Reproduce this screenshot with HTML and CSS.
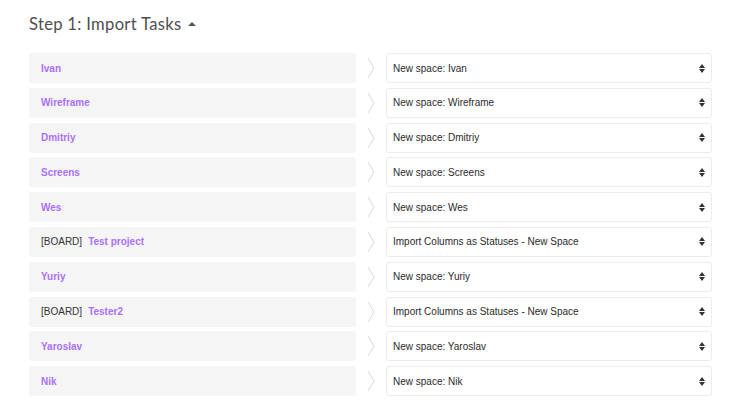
FILE: index.html
```html
<!DOCTYPE html>
<html>
<head>
<meta charset="utf-8">
<link rel="stylesheet" href="styles.css">
</head>
<body>
<div class="page">
  <h2 class="title">Step 1: Import Tasks <span class="caret"></span></h2>
  <div class="rows">
    <div class="row"><div class="src"><span class="name">Ivan</span></div><div class="chev"><svg width="8" height="22" viewBox="0 0 8 22"><path d="M1 1 L7 11 L1 21" fill="none" stroke="#d8d8d8" stroke-width="1"/></svg></div><div class="dst"><span>New space: Ivan</span><span class="arrows"></span></div></div>
    <div class="row"><div class="src"><span class="name">Wireframe</span></div><div class="chev"><svg width="8" height="22" viewBox="0 0 8 22"><path d="M1 1 L7 11 L1 21" fill="none" stroke="#d8d8d8" stroke-width="1"/></svg></div><div class="dst"><span>New space: Wireframe</span><span class="arrows"></span></div></div>
    <div class="row"><div class="src"><span class="name">Dmitriy</span></div><div class="chev"><svg width="8" height="22" viewBox="0 0 8 22"><path d="M1 1 L7 11 L1 21" fill="none" stroke="#d8d8d8" stroke-width="1"/></svg></div><div class="dst"><span>New space: Dmitriy</span><span class="arrows"></span></div></div>
    <div class="row"><div class="src"><span class="name">Screens</span></div><div class="chev"><svg width="8" height="22" viewBox="0 0 8 22"><path d="M1 1 L7 11 L1 21" fill="none" stroke="#d8d8d8" stroke-width="1"/></svg></div><div class="dst"><span>New space: Screens</span><span class="arrows"></span></div></div>
    <div class="row"><div class="src"><span class="name">Wes</span></div><div class="chev"><svg width="8" height="22" viewBox="0 0 8 22"><path d="M1 1 L7 11 L1 21" fill="none" stroke="#d8d8d8" stroke-width="1"/></svg></div><div class="dst"><span>New space: Wes</span><span class="arrows"></span></div></div>
    <div class="row"><div class="src"><span class="tag">[BOARD]</span><span class="name">Test project</span></div><div class="chev"><svg width="8" height="22" viewBox="0 0 8 22"><path d="M1 1 L7 11 L1 21" fill="none" stroke="#d8d8d8" stroke-width="1"/></svg></div><div class="dst"><span>Import Columns as Statuses - New Space</span><span class="arrows"></span></div></div>
    <div class="row"><div class="src"><span class="name">Yuriy</span></div><div class="chev"><svg width="8" height="22" viewBox="0 0 8 22"><path d="M1 1 L7 11 L1 21" fill="none" stroke="#d8d8d8" stroke-width="1"/></svg></div><div class="dst"><span>New space: Yuriy</span><span class="arrows"></span></div></div>
    <div class="row"><div class="src"><span class="tag">[BOARD]</span><span class="name">Tester2</span></div><div class="chev"><svg width="8" height="22" viewBox="0 0 8 22"><path d="M1 1 L7 11 L1 21" fill="none" stroke="#d8d8d8" stroke-width="1"/></svg></div><div class="dst"><span>Import Columns as Statuses - New Space</span><span class="arrows"></span></div></div>
    <div class="row"><div class="src"><span class="name">Yaroslav</span></div><div class="chev"><svg width="8" height="22" viewBox="0 0 8 22"><path d="M1 1 L7 11 L1 21" fill="none" stroke="#d8d8d8" stroke-width="1"/></svg></div><div class="dst"><span>New space: Yaroslav</span><span class="arrows"></span></div></div>
    <div class="row"><div class="src"><span class="name">Nik</span></div><div class="chev"><svg width="8" height="22" viewBox="0 0 8 22"><path d="M1 1 L7 11 L1 21" fill="none" stroke="#d8d8d8" stroke-width="1"/></svg></div><div class="dst"><span>New space: Nik</span><span class="arrows"></span></div></div>
  </div>
</div>
</body>
</html>
```
FILE: styles.css
```css
* { box-sizing: border-box; }
html, body { margin: 0; padding: 0; background: #fff; }
body { font-family: "Liberation Sans", sans-serif; }
.page { padding: 12px 26px 0 29px; width: 738px; }
.title {
  margin: 0;
  font-family: "Lato", "Liberation Sans", sans-serif;
  font-size: 16.6px;
  font-weight: 400;
  color: #4f4f4f;
  height: 24px;
  line-height: 24px;
  display: flex;
  align-items: center;
  letter-spacing: 0.3px;
}
.caret {
  display: inline-block;
  width: 0; height: 0;
  margin-left: 7px;
  border-left: 4px solid transparent;
  border-right: 4px solid transparent;
  border-bottom: 4px solid #555;
}
.rows { margin-top: 17px; display: flex; flex-direction: column; gap: 4.8px; }
.row { display: flex; height: 30px; align-items: stretch; }
.src {
  width: 327px;
  background: #f5f5f5;
  border-radius: 3px;
  display: flex;
  align-items: center;
  padding-left: 12px;
  font-size: 10px;
}
.name { color: #ab70fa; font-weight: 700; }
.tag { color: #333; margin-right: 6px; }
.chev { width: 30px; display: flex; align-items: center; justify-content: center; }
.dst {
  width: 326px;
  border: 1px solid #ececec;
  border-radius: 3px;
  background: #fff;
  display: flex;
  align-items: center;
  justify-content: space-between;
  padding: 0 6px 0 6px;
  font-size: 10px;
  color: #2a2a2a;
}
.arrows {
  position: relative;
  width: 6px; height: 9px;
}
.arrows::before, .arrows::after {
  content: "";
  position: absolute;
  left: 0;
  border-left: 3px solid transparent;
  border-right: 3px solid transparent;
}
.arrows::before { top: 0; border-bottom: 4px solid #333; }
.arrows::after { bottom: 0; border-top: 4px solid #333; }
```
